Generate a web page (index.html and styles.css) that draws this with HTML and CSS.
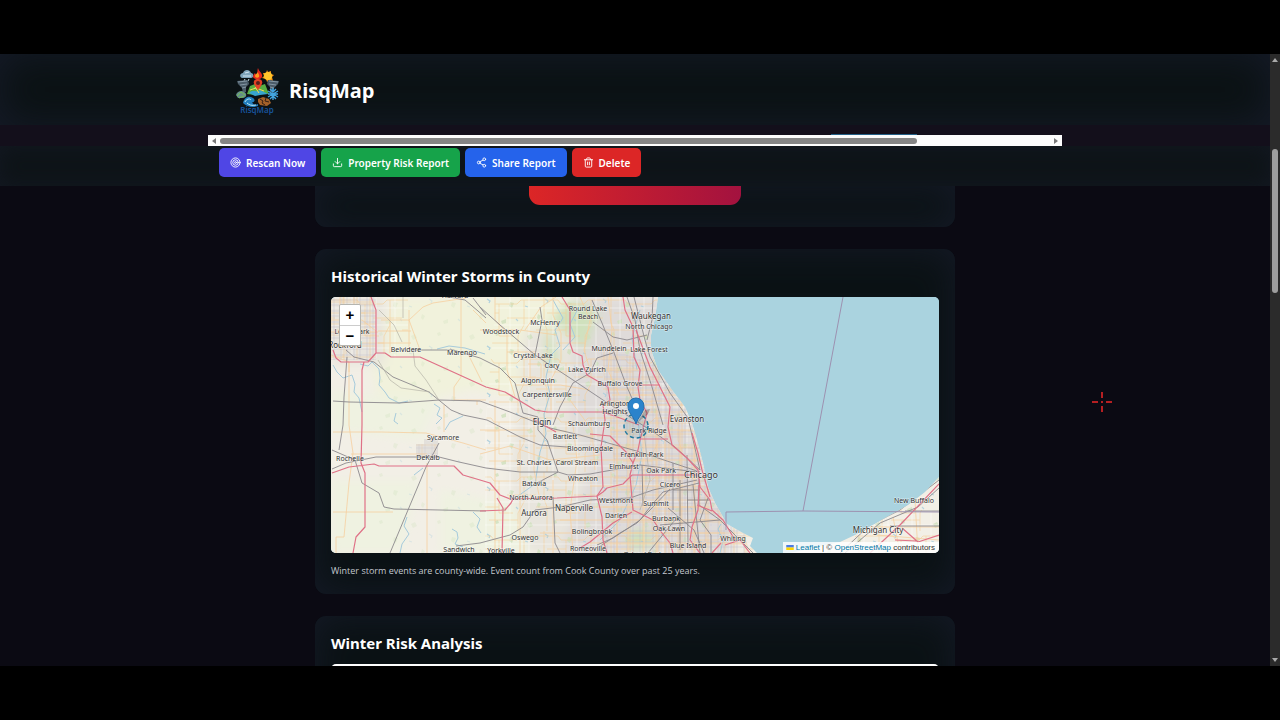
FILE: index.html
```html
<!DOCTYPE html>
<html lang="en">
<head>
    <meta charset="UTF-8">
    <meta name="viewport" content="width=device-width, initial-scale=1.0">
    <title>RisqMap</title>
    <link rel="stylesheet" href="styles.css">
</head>
<body>
    <div class="window">
        <div class="page">
            <header class="header">
                <div class="container brand">
                    <svg class="logo" viewBox="0 0 44 48" aria-hidden="true">
                        <!-- cloud, flame, sun -->
                        <path d="M6 11c-3-1-2-5 1-5 1-4 7-4 8 0 3 0 3 5 0 5z" fill="#7fa5bb"/>
                        <path d="M7 9h8M9 6l4-1M9 12l-1 2M13 12l-1 2" stroke="#d5e8f2" stroke-width="1"/>
                        <path d="M22 1c1 4 5 5 4 9-1 3-8 3-9 0 0-2 1-3 2-4l1 2c2-2 1-4 2-7z" fill="#e8281c"/>
                        <path d="M22 5c0 2 2 3 1 5-1 1-4 1-4-1s2-2 3-4z" fill="#ff9a21"/>
                        <path d="M31 3l1 2 3-1v3l3 1-2 2 1 4-3-1-3 2-1-3-4-1 2-2-1-3 3 0z" fill="#f39416"/>
                        <circle cx="32" cy="9" r="4" fill="#ffc52b"/>
                        <!-- tornadoes -->
                        <path d="M1 14l11-1 1 4-3 3v5l-3 1-1-5-4-4z" fill="#4b5b68"/>
                        <path d="M2 15l9-1M4 18l7-1M6 21l4-1" stroke="#8496a3" stroke-width="1"/>
                        <path d="M43 14l-11-1-1 4 3 3v5l3 1 1-5 4-4z" fill="#4b5b68"/>
                        <path d="M42 15l-9-1M40 18l-7-1M38 21l-4-1" stroke="#8496a3" stroke-width="1"/>
                        <!-- folded map with pin -->
                        <path d="M14 19l5-2 4 2 6-2 4 10-9-1-5 2-8-1z" fill="#58ae43"/>
                        <path d="M13 26c4-4 7 0 11-3l8 4-8 1-5 1z" fill="#38a5cf"/>
                        <path d="M19 20l4 6M14 23l6-2 8 3" stroke="#f0d95b" stroke-width="1" fill="none"/>
                        <path d="M22 23c-7-8-4-11 0-11s7 3 0 11z" fill="#e34125"/>
                        <circle cx="22" cy="16" r="2" fill="#5b211c"/>
                        <!-- hail, wave, quake, frost -->
                        <path d="M0 28c1-4 6-5 8-3 4 2 2 6-1 6H2z" fill="#658e88"/>
                        <path d="M1 29l4-4 4 3M3 31l5-2" stroke="#72bd50" stroke-width="1" fill="none"/>
                        <path d="M7 36c1-5 5-8 10-5 3 2 1 5-1 4 1 3 4 3 6 2v2c-5 2-11 1-15-3z" fill="#2380c0"/>
                        <path d="M9 35c1-3 5-4 6-2M11 36c2 2 5 3 9 2" stroke="#bde7f4" stroke-width="1" fill="none"/>
                        <path d="M22 32l5-2 6 2 2 4-4 3-7-1-2-3z" fill="#a36129"/>
                        <path d="M24 32l3 2-1 2 3 2M30 31l-1 3 4 1" stroke="#352017" stroke-width="1" fill="none"/>
                        <path d="M37 21v12M32 24l10 6M42 24l-10 6M34 22l3 3 3-3M34 32l3-3 3 3M32 27h10" stroke="#43a5df" stroke-width="1.4" fill="none"/>
                        <text x="21" y="46" text-anchor="middle">RisqMap</text>
                    </svg>
                    <span class="brand-name">RisqMap</span>
                </div>
            </header>

            <nav class="tabs">
                <div class="container tab-scroller">
                    <div class="tab-row"><span class="active-tab"></span></div>
                    <div class="hscroll">
                        <svg viewBox="0 0 8 8"><path d="M6 1v6L2 4z"/></svg>
                        <div class="hscroll-track"><div class="hscroll-thumb"></div></div>
                        <svg viewBox="0 0 8 8"><path d="M2 1v6l4-3z"/></svg>
                    </div>
                </div>
            </nav>

            <div class="toolbar">
                <div class="container actions">
                    <button class="btn rescan">
                        <svg viewBox="0 0 24 24"><circle cx="12" cy="12" r="10"/><circle cx="12" cy="12" r="6"/><circle cx="12" cy="12" r="2"/></svg>
                        Rescan Now
                    </button>
                    <button class="btn report">
                        <svg viewBox="0 0 24 24"><path d="M21 15v4a2 2 0 0 1-2 2H5a2 2 0 0 1-2-2v-4M7 10l5 5 5-5M12 15V3"/></svg>
                        Property Risk Report
                    </button>
                    <button class="btn share">
                        <svg viewBox="0 0 24 24"><circle cx="18" cy="5" r="3"/><circle cx="6" cy="12" r="3"/><circle cx="18" cy="19" r="3"/><path d="M9 14l6 3M15 7l-6 3"/></svg>
                        Share Report
                    </button>
                    <button class="btn delete">
                        <svg viewBox="0 0 24 24"><path d="M3 6h18M19 6v14a2 2 0 0 1-2 2H7a2 2 0 0 1-2-2V6M8 6V4a2 2 0 0 1 2-2h4a2 2 0 0 1 2 2v2M10 11v6M14 11v6"/></svg>
                        Delete
                    </button>
                </div>
            </div>

            <main class="content">
                <section class="card card-top">
                    <div class="risk-level"></div>
                </section>

                <section class="card">
                    <h2>Historical Winter Storms in County</h2>
                    <div class="map">
                        <svg class="map-tiles" viewBox="331 297 608 256" preserveAspectRatio="xMidYMid slice">
                            <defs>
                                <clipPath id="land">
                                    <path d="M331 297H658L655 318 651 335 651 350 658 370 672 390 685 407 692 423 697 440 703 463 708 487 715 503 723 517 727 524 743 533 753 538 750 546 757 553H331zM790 553L840 542 855 535 878 522 908 505 925 492 939 477V553z"/>
                                </clipPath>
                                <pattern id="streets" width="67" height="59" patternUnits="userSpaceOnUse">
                                    <path d="M0 5H22L25 9H48L52 5H67M8 0V27L11 35V59M30 9V41H44M55 5V30L49 41V59M0 35H30M38 23H67M20 48H49M11 18H30" fill="none" stroke="#f5cc92" stroke-width="0.8"/>
                                    <path d="M0 13H67M17 0V59M41 0V59M0 30H67M60 0V59M0 53H67" fill="none" stroke="#fff" stroke-width="0.6"/>
                                </pattern>
                                <pattern id="blocks" width="13" height="11" patternUnits="userSpaceOnUse">
                                    <path d="M0 3H13M0 8H13M3 0V11M9 0V11" fill="none" stroke="#bdb8c6" stroke-width="0.5"/>
                                    <path d="M0 5H13M6 0V11" fill="none" stroke="#f1c184" stroke-width="0.5"/>
                                </pattern>
                                <pattern id="woods" width="58" height="47" patternUnits="userSpaceOnUse">
                                    <path d="M5 7l4-2 2 4-4 2zM31 4l3-1 1 3-3 1zM46 20l4 1-2 5-3-2zM16 32l3 2-2 4-2-2zM37 39l5-2v4l-4 1z" fill="#cfe0bd"/>
                                    <path d="M23 17l3 2-1 2M52 37l2 2M3 24l3 1" fill="none" stroke="#a8cddd" stroke-width="1.2"/>
                                </pattern>
                                <filter id="soft"><feGaussianBlur stdDeviation="5"/></filter>
                            </defs>
                            <rect x="331" y="297" width="608" height="256" fill="#aad3df"/>
                            <g clip-path="url(#land)">
                                <rect x="331" y="297" width="608" height="256" fill="#f2efe6"/>
                                <g filter="url(#soft)">
                                    <path d="M395 297H560V400L470 390 380 410 370 360z" fill="#f1f2dc"/>
                                    <path d="M331 480H420L400 553H331zM440 490L540 510 530 553H440zM331 390L440 400 420 440 331 430z" fill="#eff2e1"/>
                                    <path d="M331 297H385V365H331zM525 330H600L620 553H530L510 480z" fill="#e8e5dd"/>
                                    <path d="M575 297H660L665 365 705 470 735 535V553H560L590 470 570 420z" fill="#dfdbd9"/>
                                    <path d="M570 300L600 310 585 350 550 320zM625 535l20-8 12 18-24 6zM545 320l15 40-15 10z" fill="#d0e1bd"/>
                                </g>
                                <rect x="376" y="297" width="120" height="256" fill="url(#woods)" opacity=".3"/>
                                <rect x="485" y="297" width="454" height="256" fill="url(#woods)" opacity=".8"/>
                                <path d="M331 297H408V358H331zM496 297H760V553H485V430zM855 553V510H939V553z" fill="url(#streets)" opacity=".7"/>
                                <path d="M600 345L670 370 740 520 750 553H600L615 470zM331 297H376V360H331z" fill="url(#blocks)" opacity=".8"/>
                                <path d="M416 444h22v14h-22zM424 439h14v8h-14z" fill="#e3e0db"/>
                                <path d="M416 444h22v14h-22z" fill="url(#blocks)" opacity=".5"/>

                                <g class="river">
                                    <path d="M333 365l4 7 6 6 9-3 3 9-1 8 5 6 3 14M360 364l8 2 4-4 7 7 1 9-1 7 6 7 4 6 10 5 9-2M434 404l6 4-3 7 5 3-6 6M398 424l-4-3 2-8M400 553l2-9 7-10-5-8 3-9M452 529l5 3 1 6-3 6 8 3M473 512l7 7-3 8 4 6M437 349l12-3 16 2 20 6M553 300l10 18-8 12 5 16-9 9-5 22 4 17-6 20 2 20-6 18-5 32-17 12M563 350l12-13-5-13 9-17"/>
                                    <path d="M445 430l5-8 13-6M414 475l9-7M638 420l4 35-6 30-16 35-20 20M640 310l-8 28 5 32M720 553l3-12-5-12 3-5"/>
                                </g>
                                <g class="road">
                                    <path d="M461 297V377L454 387V400M381 320H409L423 307 433 303 466 298M409 310V350M378 331H411M378 343H411M390 321V353M409 320L420 350M331 320H362L376 331M340 297V350M354 297V335M331 332H378"/>
                                    <path d="M349 362V425L353 453 349 483 344 537H336V553M333 432H381L426 433 463 443 486 450M333 512H393M351 454H427M427 463V553M444 405V432M477 405V401M454 400H486M466 350L482 382M473 310L486 323M331 355L349 362V372"/>
                                    <path d="M495 297V320L507 333V370L515 397M507 352H535M525 330L541 307 556 297M530 353V382M528 364H541V378H528M553 297V315L561 333V360L551 380V410M480 330H520L557 335M515 385H560L590 390M495 400V553M520 440V553M534 420V470L540 500M553 480V553M573 425L577 460 570 510 573 553M480 454L510 446 550 460 600 455M480 430H530M570 400L592 430 595 470M580 297L590 320 584 350 591 373M608 297L612 330 608 370 619 395M597 350H650M602 370H658M612 395H680M605 405H685M610 430H693M600 447H697M590 460H700M590 486H705M588 507H712M560 520H717M540 533H725M590 543H742M617 420V553M628 430V553M644 430V553M657 410V553M665 430V553M680 430V553M694 440V553M706 490V553"/>
                                    <path d="M870 527H939M893 517L900 553M915 500L918 553M877 535L939 540"/>
                                </g>
                                <g class="rail">
                                    <path d="M473 298L486 315M449 297L465 300 478 311 486 318M480 307L500 325 535 355 573 380 603 400 655 433 675 447 700 470M450 349L480 358 500 368 515 383 523 413 538 417V430L547 440 558 472 537 483M346 350L354 357 374 362 393 377 429 392 451 410 463 415 487 420 520 437 540 445 567 447M333 401L349 402 399 403 439 400 480 401 510 412 550 428 580 435 640 452 700 472"/>
                                    <path d="M347 357L344 397 343 425 339 450M332 450L355 460 362 483 379 493 384 507 394 509 486 511M332 469L346 463 376 457H439L459 462 486 468 520 472 558 472 568 475 590 474 640 465 697 472M439 443L426 467 390 553M456 546L480 543 510 535 523 527 535 510 560 507 590 500 630 498 653 490 697 480M553 497L555 543 560 553"/>
                                    <path d="M597 545L613 538 630 527 640 520 650 507 663 492 699 483M599 547L620 533 637 523 651 509 670 489M699 476V505L720 520 753 553M687 455L688 547M673 463V510M627 297L635 320 640 350 652 387 663 425M634 297L645 340 650 357 670 393 688 418 700 470M653 297L652 320 647 340"/>
                                    <path d="M592 300L602 323 613 350 627 387 638 412M593 322L613 337 627 340 647 335M613 353L597 358 590 373 573 383 560 407 553 425M540 307L542 320 535 355M413 350H450M680 480V550M687 500H710M668 508L694 530 704 553M708 498L700 520 711 535V553M660 525L720 520M642 465L643 506M648 553L675 520M693 485L700 553M673 490H700"/>
                                    <path d="M840 553L870 525 900 510 939 480M845 553L880 523 918 507 939 488M890 526H939M905 511H939"/>
                                </g>
                                <g class="lane">
                                    <path d="M403 297V318M413 350L415 366 426 380 439 400M379 310L394 325 402 342M378 360L390 380 401 388 430 392M643 425L650 480 640 510"/>
                                </g>
                                <g class="motorway">
                                    <path d="M371 297L376 310V353L385 353 391 357H420L486 387 505 392 535 410 547 412H603L620 418 639 425M333 350L336 358 341 362H368L376 353M364 362L362 370V425L361 463 365 473V527L356 537 353 553M332 473L349 467 374 464 379 466H454L463 475 480 480 490 483 500 495 510 499 557 498 597 496 603 492 607 488 623 484 632 475"/>
                                    <path d="M480 511L505 510 511 503 513 499M497 498L503 508 502 553M562 297L570 310V343L573 352 582 356 583 365 587 375 608 387 610 400 603 405 605 420 601 447 603 487 597 496 602 517 603 540 607 553M580 548L590 542 613 523 632 512"/>
                                    <path d="M623 297L625 310 633 327 634 357 640 370 638 387 640 400 647 413 640 440 638 450 633 463 630 475 633 510 643 515 653 520 662 533 670 543 673 553M640 385H660M636 330L650 367 660 387 670 407 668 427 672 445 687 458 698 470 700 487 710 500 712 510 723 520 735 540M640 439H668M632 475H697M692 433L698 453 702 470 710 497M699 485L698 510 692 527 690 540 700 553M590 434L610 436 626 452 633 463M533 419L556 432M725 545L740 540 750 553M697 505L712 511M712 553L721 543"/>
                                    <path d="M870 553L900 525 939 484M902 528L918 542 939 535M895 540L916 541"/>
                                </g>
                            </g>
                            <path d="M843 297L803 511M726 530V512L803 511 939 512" fill="none" stroke="#9d91b0" stroke-width="1"/>

                            <g class="towns">
                                <text x="352" y="334">Loves Park</text>
                                <text x="406" y="352">Belvidere</text>
                                <text x="462" y="355">Marengo</text>
                                <text x="501" y="334">Woodstock</text>
                                <text x="455" y="298">Harvard</text>
                                <text x="545" y="325">McHenry</text>
                                <text x="588" y="311">Round Lake</text>
                                <text x="588" y="319">Beach</text>
                                <text x="649" y="329">North Chicago</text>
                                <text x="609" y="351">Mundelein</text>
                                <text x="649" y="352">Lake Forest</text>
                                <text x="533" y="358">Crystal Lake</text>
                                <text x="552" y="368">Cary</text>
                                <text x="587" y="372">Lake Zurich</text>
                                <text x="538" y="383">Algonquin</text>
                                <text x="620" y="386">Buffalo Grove</text>
                                <text x="547" y="397">Carpentersville</text>
                                <text x="615" y="406">Arlington</text>
                                <text x="615" y="414">Heights</text>
                                <text x="589" y="426">Schaumburg</text>
                                <text x="565" y="439">Bartlett</text>
                                <text x="649" y="433">Park Ridge</text>
                                <text x="590" y="451">Bloomingdale</text>
                                <text x="642" y="457">Franklin Park</text>
                                <text x="534" y="465">St. Charles</text>
                                <text x="577" y="465">Carol Stream</text>
                                <text x="624" y="469">Elmhurst</text>
                                <text x="661" y="473">Oak Park</text>
                                <text x="583" y="481">Wheaton</text>
                                <text x="534" y="486">Batavia</text>
                                <text x="670" y="487">Cicero</text>
                                <text x="531" y="500">North Aurora</text>
                                <text x="616" y="503">Westmont</text>
                                <text x="656" y="506">Summit</text>
                                <text x="616" y="518">Darien</text>
                                <text x="666" y="521">Burbank</text>
                                <text x="669" y="531">Oak Lawn</text>
                                <text x="592" y="534">Bolingbrook</text>
                                <text x="525" y="540">Oswego</text>
                                <text x="733" y="541">Whiting</text>
                                <text x="688" y="548">Blue Island</text>
                                <text x="588" y="551">Romeoville</text>
                                <text x="459" y="552">Sandwich</text>
                                <text x="501" y="553">Yorkville</text>
                                <text x="643" y="557">Orland Park</text>
                                <text x="443" y="440">Sycamore</text>
                                <text x="428" y="460">DeKalb</text>
                                <text x="350" y="461">Rochelle</text>
                                <text x="914" y="503">New Buffalo</text>
                            </g>
                            <g class="cities">
                                <text x="345" y="348">Rockford</text>
                                <text x="651" y="319">Waukegan</text>
                                <text x="687" y="422">Evanston</text>
                                <text x="542" y="425">Elgin</text>
                                <text x="574" y="511">Naperville</text>
                                <text x="534" y="516">Aurora</text>
                                <text x="878" y="533">Michigan City</text>
                                <text x="701" y="478" class="metro">Chicago</text>
                            </g>

                            <circle cx="636" cy="426" r="12" fill="#2c83a8" fill-opacity=".12" stroke="#1f789e" stroke-width="1.5" stroke-dasharray="4 3"/>
                            <path d="M637 423L645 410 650 409 648 414z" fill="#333" opacity=".3"/>
                            <path d="M636 424C634 417 628 413 628 406a8 8 0 0 1 16 0c0 7-6 11-8 18z" fill="#2b83cb" stroke="#2470ad" stroke-width="1"/>
                            <circle cx="636" cy="406" r="3" fill="#fff"/>
                        </svg>
                        <div class="zoom">
                            <button aria-label="Zoom in">+</button>
                            <button aria-label="Zoom out">−</button>
                        </div>
                        <div class="attribution">
                            <svg viewBox="0 0 12 8"><path d="M0 0h12v4H0z" fill="#4c7be1"/><path d="M0 4h12v4H0z" fill="#ffd500"/></svg>
                            <a href="#">Leaflet</a> | © <a href="#">OpenStreetMap</a> contributors
                        </div>
                    </div>
                    <p class="note">Winter storm events are county-wide. Event count from Cook County over past 25 years.</p>
                </section>

                <section class="card">
                    <h2>Winter Risk Analysis</h2>
                    <div class="analysis"></div>
                </section>
            </main>
        </div>

        <div class="vscroll">
            <svg viewBox="0 0 8 8"><path d="M1 6h6L4 2z"/></svg>
            <div class="vscroll-track"><div class="vscroll-thumb"></div></div>
            <svg viewBox="0 0 8 8"><path d="M1 2h6L4 6z"/></svg>
        </div>
    </div>

    <svg class="crosshair" viewBox="0 0 22 22"><path d="M11 1v6M11 15v6M1 11h6M15 11h6M10 11h2"/></svg>
</body>
</html>
```
FILE: styles.css
```css
* {
    box-sizing: border-box;
}

body {
    margin: 0;
    height: 100vh;
    padding: 54px 0;
    background: #000;
    color: #fff;
    font-family: "Noto Sans", "Open Sans", sans-serif;
    overflow: hidden;
}

.window {
    display: flex;
    height: 100%;
    overflow: hidden;
    background: #0b0a13;
}

.page {
    flex: 1;
    min-width: 0;
    display: flex;
    flex-direction: column;
}

.container {
    width: 100%;
    max-width: 854px;
    margin: 0 auto;
}

/* header */
.header {
    flex: none;
    background: #0b1214;
    box-shadow: inset 0 0 40px #161b29;
}

.brand {
    display: flex;
    align-items: center;
    gap: 9px;
    height: 71px;
    padding: 2px 28px 0;
}

.logo {
    width: 44px;
    height: 48px;
}

.logo text {
    font-size: 8px;
    font-weight: 600;
    fill: #17529a;
}

.brand-name {
    font-family: "Open Sans", sans-serif;
    font-size: 20px;
    font-weight: 700;
}

/* tabs */
.tabs {
    flex: none;
    background: #130f1b;
}

.tab-row {
    display: flex;
    height: 10px;
    align-items: flex-end;
}

.active-tab {
    width: 10%;
    height: 1px;
    margin-left: 73%;
    background: #235f86;
}

.hscroll {
    display: flex;
    align-items: center;
    height: 11px;
    padding: 0 2px;
    background: #fcfcfc;
}

.hscroll svg,
.vscroll svg {
    flex: none;
    width: 8px;
    height: 8px;
    fill: #777;
}

.hscroll-track {
    flex: 1;
    padding: 0 2px;
}

.hscroll-thumb {
    width: 84%;
    height: 6px;
    border-radius: 3px;
    background: #858585;
}

/* toolbar */
.toolbar {
    flex: none;
    background: #0e1418;
    box-shadow: inset 0 0 20px #131822;
}

.actions {
    display: flex;
    gap: 5px;
    padding: 2px 11px 9px;
}

.btn {
    display: flex;
    align-items: center;
    gap: 5px;
    height: 29px;
    padding: 0 11px;
    border: none;
    border-radius: 5px;
    color: #fff;
    font-family: inherit;
    font-size: 10px;
    font-weight: 600;
    white-space: nowrap;
    cursor: pointer;
}

.btn svg {
    width: 11px;
    height: 11px;
    fill: none;
    stroke: currentColor;
    stroke-width: 2;
    stroke-linecap: round;
    stroke-linejoin: round;
}

.rescan {
    background: #4f46e5;
}

.report {
    background: #16a34a;
}

.share {
    background: #2563eb;
}

.delete {
    background: #dc2626;
}

/* cards */
.content {
    flex: 1;
    min-height: 0;
    overflow: hidden;
    display: flex;
    flex-direction: column;
    align-items: center;
    gap: 22px;
}

.card {
    flex: none;
    width: 100%;
    max-width: 640px;
    padding: 15px 16px 16px;
    border-radius: 11px;
    background: #0b1215;
    box-shadow: inset 0 0 36px #151a27;
}

.card-top {
    padding: 0 0 22px;
    border-radius: 0 0 11px 11px;
}

.risk-level {
    width: 33%;
    height: 19px;
    margin: 0 auto;
    border-radius: 0 0 11px 11px;
    background: linear-gradient(to right, #dc2626, #a3123f);
}

h2 {
    margin: 0 0 9px;
    font-size: 15px;
    line-height: 24px;
    font-weight: 700;
}

.note {
    margin: 11px 0 0;
    font-family: "Open Sans", sans-serif;
    font-size: 9px;
    line-height: 14px;
    color: #c3c8cf;
}

.analysis {
    height: 200px;
    border-radius: 5px;
    background: #fff;
}

/* map */
.map {
    position: relative;
    height: 256px;
    border-radius: 5px;
    overflow: hidden;
    background: #aad3df;
}

.map-tiles {
    display: block;
    width: 100%;
    height: 100%;
}

.road {
    fill: none;
    stroke: #f6cfa0;
    stroke-width: 0.8;
}

.rail {
    fill: none;
    stroke: #8b888c;
    stroke-width: 0.9;
    stroke-linejoin: round;
}

.lane {
    fill: none;
    stroke: #b5b3a8;
    stroke-width: 0.7;
    stroke-linejoin: round;
}

.motorway {
    fill: none;
    stroke: #df7187;
    stroke-width: 1.2;
    stroke-linejoin: round;
}

.river {
    fill: none;
    stroke: #a5cadb;
    stroke-width: 1;
}

.towns,
.cities {
    fill: #303030;
    stroke: rgba(255, 255, 255, 0.6);
    stroke-width: 1px;
    paint-order: stroke;
    text-anchor: middle;
    font-size: 7px;
}

.cities {
    font-size: 8px;
}

.metro {
    font-size: 9px;
}

.zoom {
    position: absolute;
    top: 7px;
    left: 8px;
    border: 1px solid #b5b5b0;
    border-radius: 2px;
    overflow: hidden;
}

.zoom button {
    display: block;
    width: 20px;
    height: 20px;
    padding: 0;
    border: none;
    background: #fff;
    color: #000;
    font: bold 15px/20px "Liberation Sans", sans-serif;
}

.zoom button + button {
    border-top: 1px solid #ccc;
}

.attribution {
    position: absolute;
    right: 0;
    bottom: 0;
    padding: 0 4px 0 3px;
    background: rgba(255, 255, 255, 0.8);
    color: #333;
    font: 8px/11px "Liberation Sans", sans-serif;
}

.attribution a {
    color: #0078a8;
    text-decoration: none;
}

.attribution svg {
    width: 8px;
    height: 5px;
}

/* window scrollbar */
.vscroll {
    flex: none;
    display: flex;
    flex-direction: column;
    align-items: center;
    width: 10px;
    padding: 2px 0;
    background: #2b2b2b;
}

.vscroll svg {
    fill: #aaa;
}

.vscroll-track {
    flex: 1;
    padding-top: 85px;
}

.vscroll-thumb {
    width: 6px;
    height: 144px;
    border-radius: 3px;
    background: #9e9e9e;
}

.crosshair {
    position: absolute;
    top: 391px;
    left: 1091px;
    width: 22px;
    height: 22px;
    fill: none;
    stroke: #b51f22;
    stroke-width: 2;
}
```
